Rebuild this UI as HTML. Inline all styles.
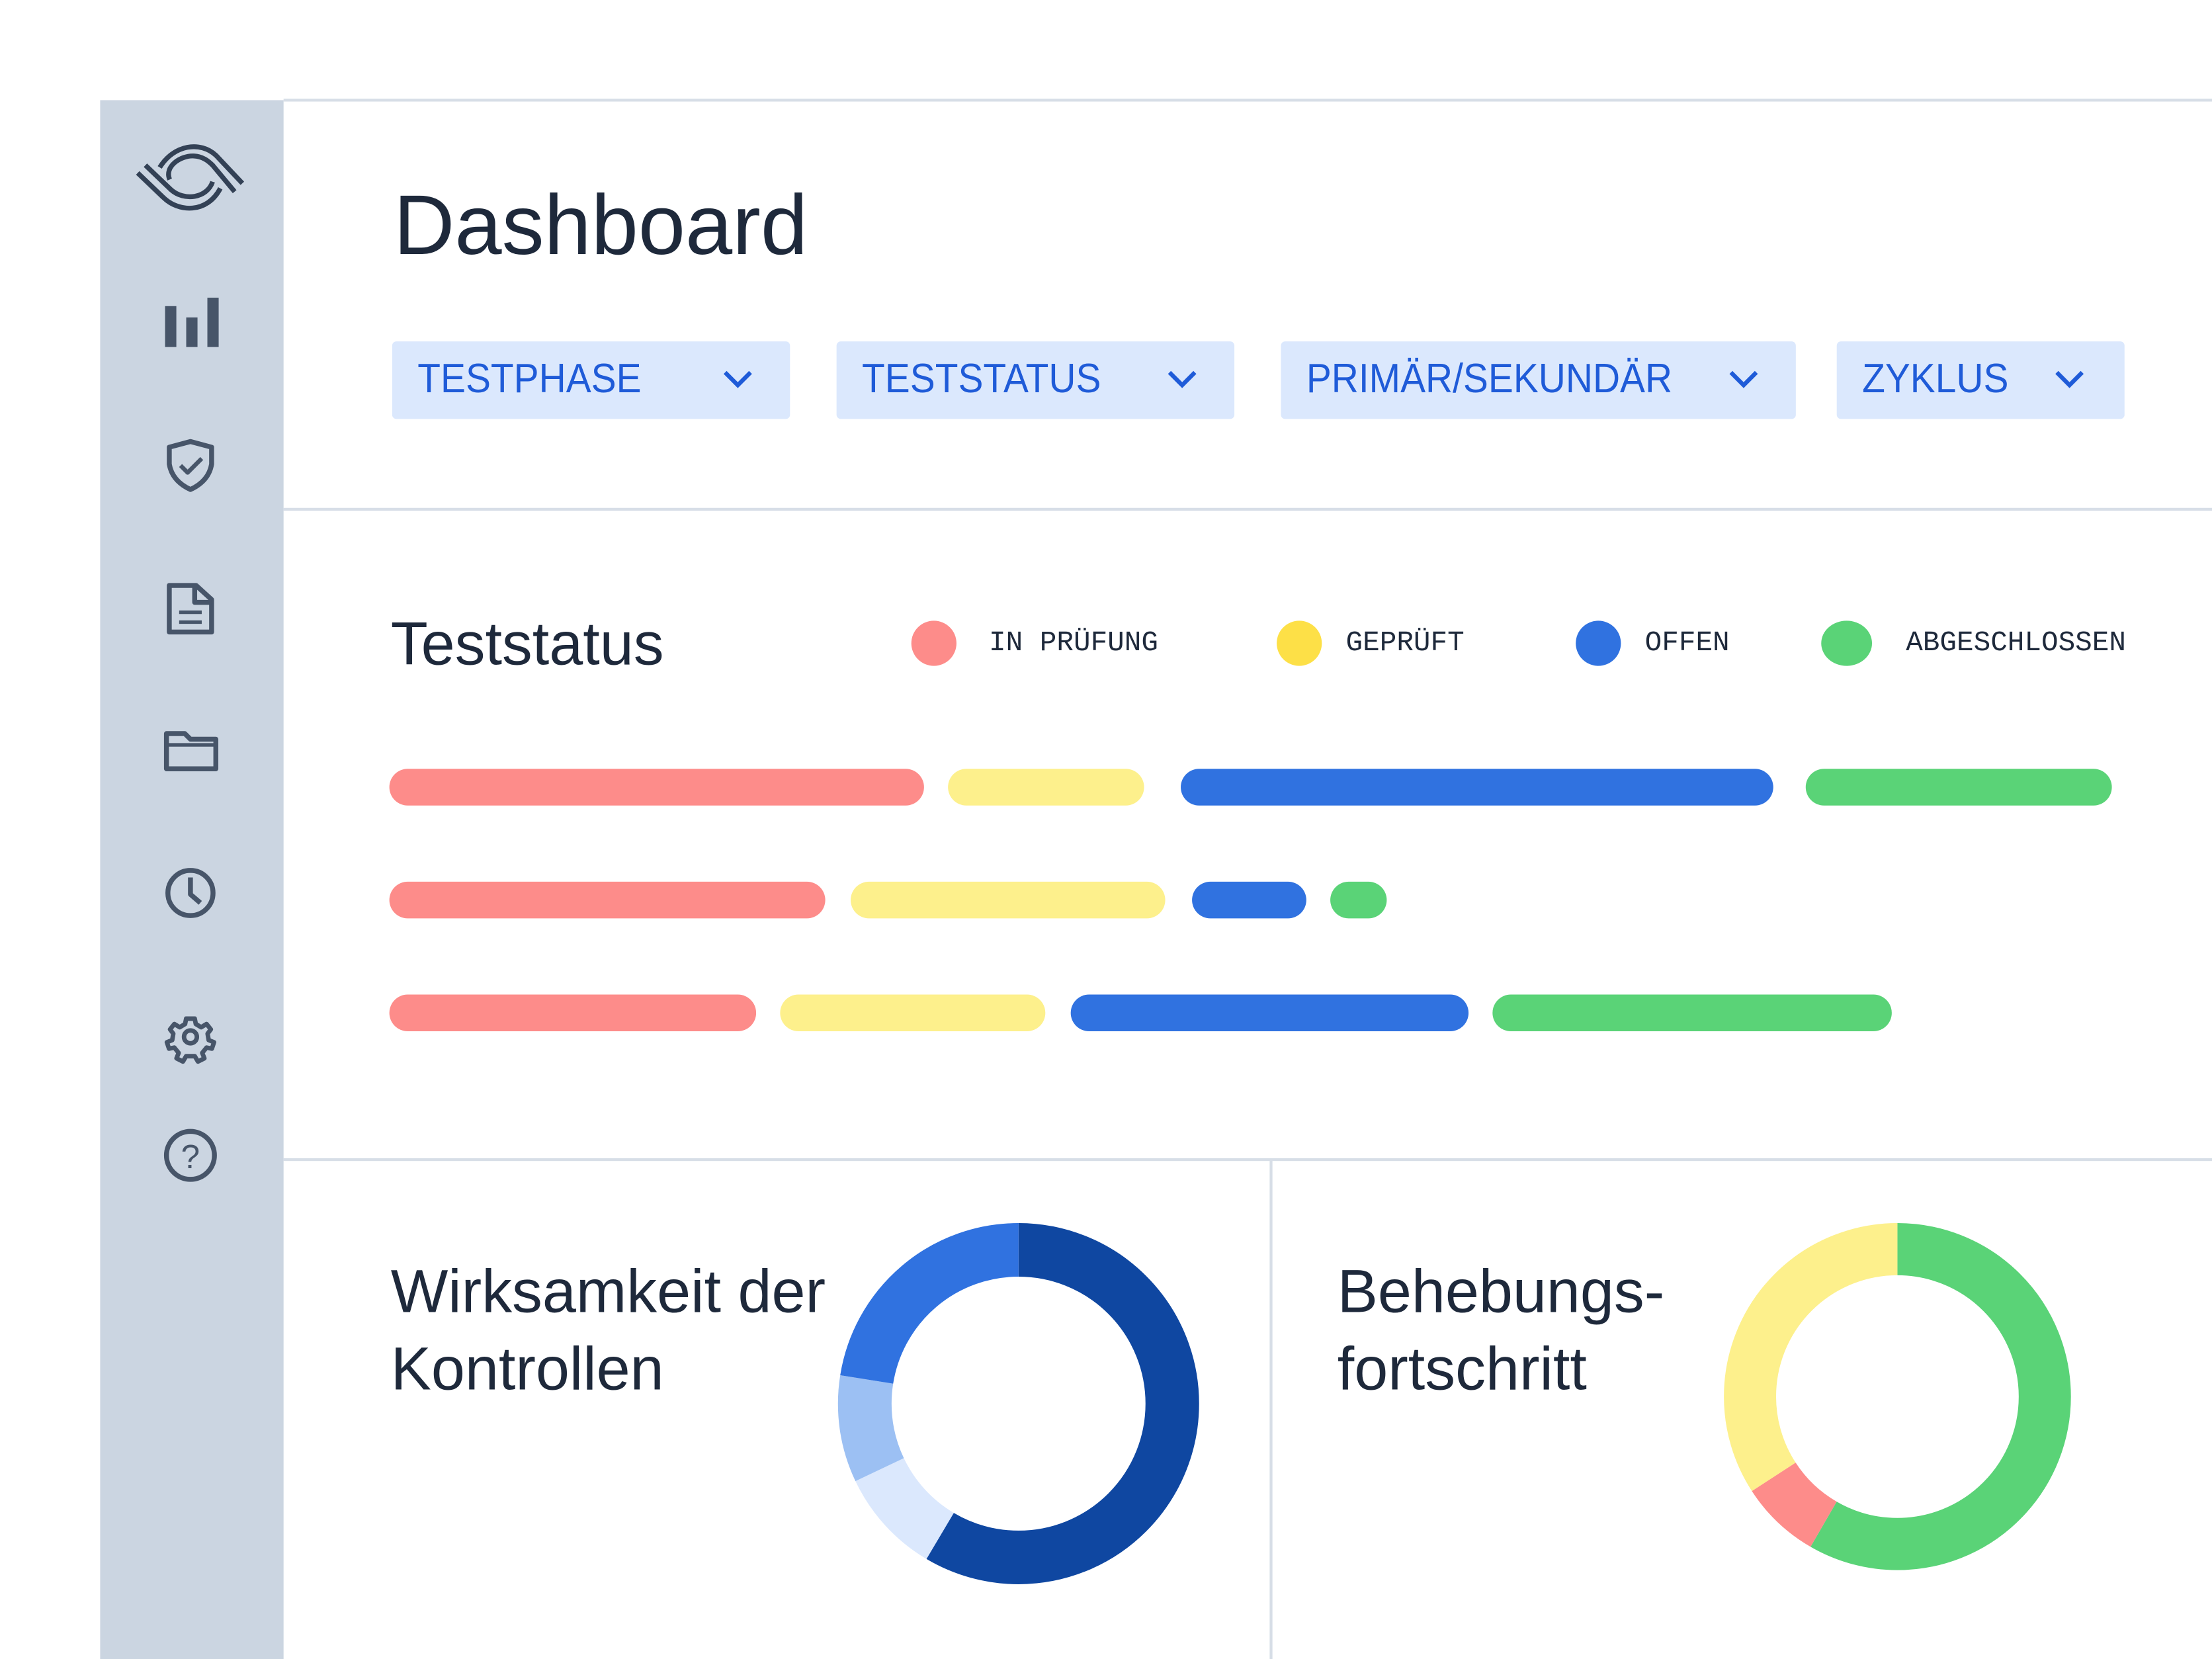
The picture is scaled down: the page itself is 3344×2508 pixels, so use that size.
<!DOCTYPE html>
<html><head><meta charset="utf-8"><style>
html,body{margin:0;padding:0;background:#fff;overflow:hidden}
body{width:3344px;height:2508px}
#w{position:absolute;left:0;top:0;width:1568px;height:1176px;transform:scale(2.13265);transform-origin:0 0;font-family:"Liberation Sans",sans-serif;color:#1e293b}
.a{position:absolute}
.btn{position:absolute;top:242px;height:55px;background:#dbe8fd;border-radius:3px;color:#1f5bd8;font-size:29px;line-height:55px;box-sizing:border-box;padding-left:18px}
.btn span{display:inline-block;transform:scaleX(0.92);transform-origin:0 50%}
.btn svg{position:absolute;right:26px;top:20px}
.bar{position:absolute;height:26px;border-radius:13px}
.r{background:#fd8c8a}.y{background:#fdf08c}.b{background:#3072e0}.g{background:#5ad377}
.lg{position:absolute;top:445px;font-family:"Liberation Mono",monospace;font-size:20px;color:#1e293b}
.dot{position:absolute;width:32px;height:32px;border-radius:50%;top:440px}
</style></head><body><div id="w">
<div class="a" style="left:71px;top:71px;width:130px;height:1105px;background:#cbd5e1"></div>
<div class="a" style="left:201px;top:70px;width:1367px;height:2px;background:#d7dee7"></div>
<div class="a" style="left:201px;top:360px;width:1367px;height:2px;background:#d7dee7"></div>
<div class="a" style="left:201px;top:821px;width:1367px;height:2px;background:#d7dee7"></div>
<div class="a" style="left:900px;top:822px;width:2px;height:354px;background:#d7dee7"></div>

<svg class="a" style="left:89.1px;top:89.1px" width="93.75" height="70.3" viewBox="0 0 600 450" fill="none" stroke="#334155" stroke-width="22">
<path d="M55 215 L170 325 C 240 395 370 400 430 285"/>
<path d="M90 180 L205 290 C 265 345 370 330 395 255"/>
<path d="M155 190 C 220 85 340 70 410 135 L530 262"/>
<path d="M200 245 C 175 185 250 135 310 138 C 350 140 375 160 395 180 L495 300"/>
</svg>

<svg class="a" style="left:71px;top:71px" width="130" height="800" viewBox="0 0 130 800" fill="none" stroke="#334155">
<g fill="#475569" stroke="none">
<rect x="46" y="146" width="8" height="29"/><rect x="61" y="154" width="8" height="21"/><rect x="76" y="140" width="8" height="35"/>
</g>
<g stroke="#475569" stroke-width="3.5" fill="none" stroke-linejoin="round">
<path d="M49 246 L64 242 L79 246 L79 258 Q77 270 64 276 Q51 270 49 258 Z"/>
<path d="M57 259 L62 264 L72 254" stroke-width="3"/>
<path d="M49 344 L68 344 L79 354 L79 377 L49 377 Z"/><path d="M67 344 L67 356 L79 356"/><path d="M56 363 L72 363 M56 370 L72 370" stroke-width="2.5"/>
<path d="M47 449 L60 449 L64 453 L82 453 L82 474 L47 474 Z"/><path d="M47 457 L82 457" stroke-width="2.5"/>
<circle cx="64" cy="562" r="16"/><path d="M64 551 L64 563 L71 569"/>
<g transform="translate(64 664) scale(0.76) translate(-64 -664)" stroke-width="4.2">
<circle cx="64" cy="664" r="6"/>
<path d="M60 647 L68 647 L69 652 L74 655 L79 652 L83 657 L80 661 L81 667 L86 669 L84 675 L79 674 L75 679 L77 684 L71 687 L68 682 L60 682 L57 687 L51 684 L53 679 L49 674 L44 675 L42 669 L47 667 L48 661 L45 657 L49 652 L54 655 L59 652 Z"/>
</g>
<circle cx="64" cy="748" r="17"/>
</g>
<text x="64" y="757" text-anchor="middle" font-family="Liberation Sans" font-size="24" fill="#475569" stroke="none">?</text>
</svg>

<div class="a" style="left:279px;top:125px;font-size:60px;line-height:70px;color:#1e293b">Dashboard</div>

<div class="btn" style="left:278px;width:282px"><span>TESTPHASE</span><svg width="22" height="14" viewBox="0 0 22 14"><path d="M2 2 L11 11 L20 2" stroke="#1f5bd8" stroke-width="3" fill="none"/></svg></div>
<div class="btn" style="left:593px;width:282px"><span>TESTSTATUS</span><svg width="22" height="14" viewBox="0 0 22 14"><path d="M2 2 L11 11 L20 2" stroke="#1f5bd8" stroke-width="3" fill="none"/></svg></div>
<div class="btn" style="left:908px;width:365px"><span>PRIMÄR/SEKUNDÄR</span><svg width="22" height="14" viewBox="0 0 22 14"><path d="M2 2 L11 11 L20 2" stroke="#1f5bd8" stroke-width="3" fill="none"/></svg></div>
<div class="btn" style="left:1302px;width:204px"><span>ZYKLUS</span><svg width="22" height="14" viewBox="0 0 22 14" style="right:28px"><path d="M2 2 L11 11 L20 2" stroke="#1f5bd8" stroke-width="3" fill="none"/></svg></div>

<div class="a" style="left:277px;top:431px;font-size:43px;line-height:52px">Teststatus</div>
<div class="dot" style="left:646px;background:#fd8c8a"></div><div class="lg" style="left:701px">IN PRÜFUNG</div>
<div class="dot" style="left:905px;background:#fde047"></div><div class="lg" style="left:954px">GEPRÜFT</div>
<div class="dot" style="left:1117px;background:#3072e0"></div><div class="lg" style="left:1166px">OFFEN</div>
<div class="dot" style="left:1291px;width:36px;background:#5ad377"></div><div class="lg" style="left:1351px">ABGESCHLOSSEN</div>

<div class="bar r" style="left:276px;top:545px;width:379px"></div>
<div class="bar y" style="left:672px;top:545px;width:139px"></div>
<div class="bar b" style="left:837px;top:545px;width:420px"></div>
<div class="bar g" style="left:1280px;top:545px;width:217px"></div>
<div class="bar r" style="left:276px;top:625px;width:309px"></div>
<div class="bar y" style="left:603px;top:625px;width:223px"></div>
<div class="bar b" style="left:845px;top:625px;width:81px"></div>
<div class="bar g" style="left:943px;top:625px;width:40px"></div>
<div class="bar r" style="left:276px;top:705px;width:260px"></div>
<div class="bar y" style="left:553px;top:705px;width:188px"></div>
<div class="bar b" style="left:759px;top:705px;width:282px"></div>
<div class="bar g" style="left:1058px;top:705px;width:283px"></div>

<div class="a" style="left:277px;top:889px;font-size:43px;line-height:55px">Wirksamkeit der<br>Kontrollen</div>
<div class="a" style="left:948px;top:889px;font-size:43px;line-height:55px">Behebungs-<br>fortschritt</div>

<svg class="a" style="left:0;top:0" width="1568" height="1176" fill="none">
<g transform="rotate(-90 722 995)" stroke-width="38">
<circle cx="722" cy="995" r="109" stroke="#0f47a1" stroke-dasharray="400.7 684.87"/>
<circle cx="722" cy="995" r="109" stroke="#dbe8fd" stroke-dasharray="0 400.7 64.5 684.87"/>
<circle cx="722" cy="995" r="109" stroke="#9cc0f3" stroke-dasharray="0 465.2 65.6 684.87"/>
<circle cx="722" cy="995" r="109" stroke="#3072e0" stroke-dasharray="0 530.8 154.1 684.87"/>
</g>
<g transform="rotate(-90 1345 990)" stroke-width="37">
<circle cx="1345" cy="990" r="104.5" stroke="#5ad377" stroke-dasharray="383 656.6"/>
<circle cx="1345" cy="990" r="104.5" stroke="#fd8c8a" stroke-dasharray="0 383 49.2 656.6"/>
<circle cx="1345" cy="990" r="104.5" stroke="#fdf08c" stroke-dasharray="0 432.2 224.4 656.6"/>
</g>
</svg>
</div></body></html>
